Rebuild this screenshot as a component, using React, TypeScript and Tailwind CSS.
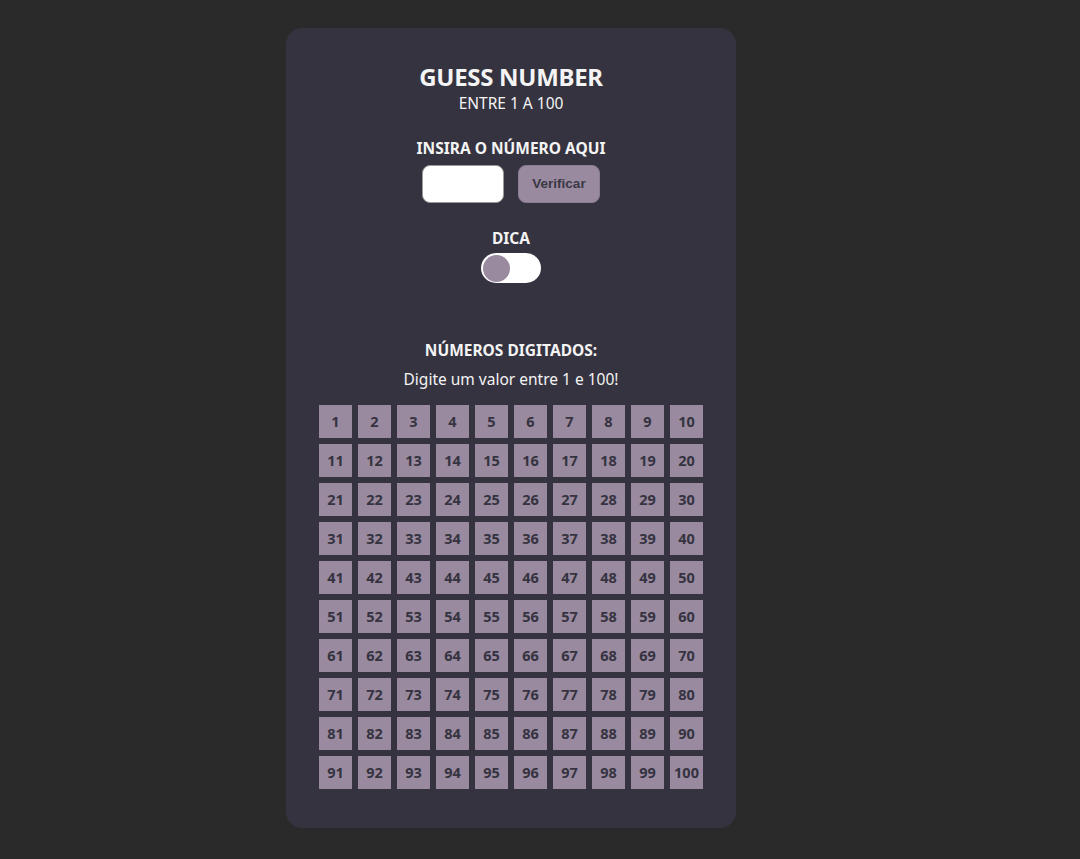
import React from "react";

export default function App() {
  const nums = Array.from({ length: 100 }, (_, i) => i + 1);
  return (
    <div className="min-h-[859px] w-full bg-[#2a2a2a] flex justify-center pr-[58px] pt-[28px] pb-[31px]" style={{ fontFamily: '"Noto Sans", "Open Sans", sans-serif' }}>
      <div className="w-[450px] h-[800px] bg-[#353340] rounded-[16px] flex flex-col items-center pt-[35px] text-[#f4f4f4]">
        <h1 className="text-[24px] font-bold leading-[28px] tracking-[-0.3px]">GUESS NUMBER</h1>
        <p className="text-[15.5px] leading-[20px] mt-[2px]">ENTRE 1 A 100</p>
        <h2 className="text-[15.5px] font-bold leading-[20px] mt-[25px]">INSIRA O NÚMERO AQUI</h2>
        <div className="flex gap-[14px] mt-[7px]">
          <input className="w-[82px] h-[38px] bg-white rounded-[8px] border border-[#9a9a9a] outline-none" />
          <button className="w-[82px] h-[38px] bg-[#998aa0] rounded-[8px] border border-[#8a7d92] text-[#3a3844] text-[13.5px] font-bold" style={{ fontFamily: '"Liberation Sans", Arial, sans-serif' }}>Verificar</button>
        </div>
        <h2 className="text-[15.5px] font-bold leading-[20px] mt-[25px]">DICA</h2>
        <div className="w-[60px] h-[30px] bg-white rounded-full mt-[5px] flex items-center pl-[2px]">
          <div className="w-[27px] h-[27px] rounded-full bg-[#998aa0]" />
        </div>
        <h2 className="text-[15.5px] font-bold leading-[20px] mt-[57px]">NÚMEROS DIGITADOS:</h2>
        <p className="text-[15.5px] leading-[20px] mt-[9px]">Digite um valor entre 1 e 100!</p>
        <div className="grid grid-cols-10 gap-[6px] mt-[16px]">
          {nums.map((n) => (
            <div key={n} className="w-[33px] h-[33px] bg-[#998aa0] flex items-center justify-center text-[14.5px] font-bold text-[#35333f]">
              {n}
            </div>
          ))}
        </div>
      </div>
    </div>
  );
}
